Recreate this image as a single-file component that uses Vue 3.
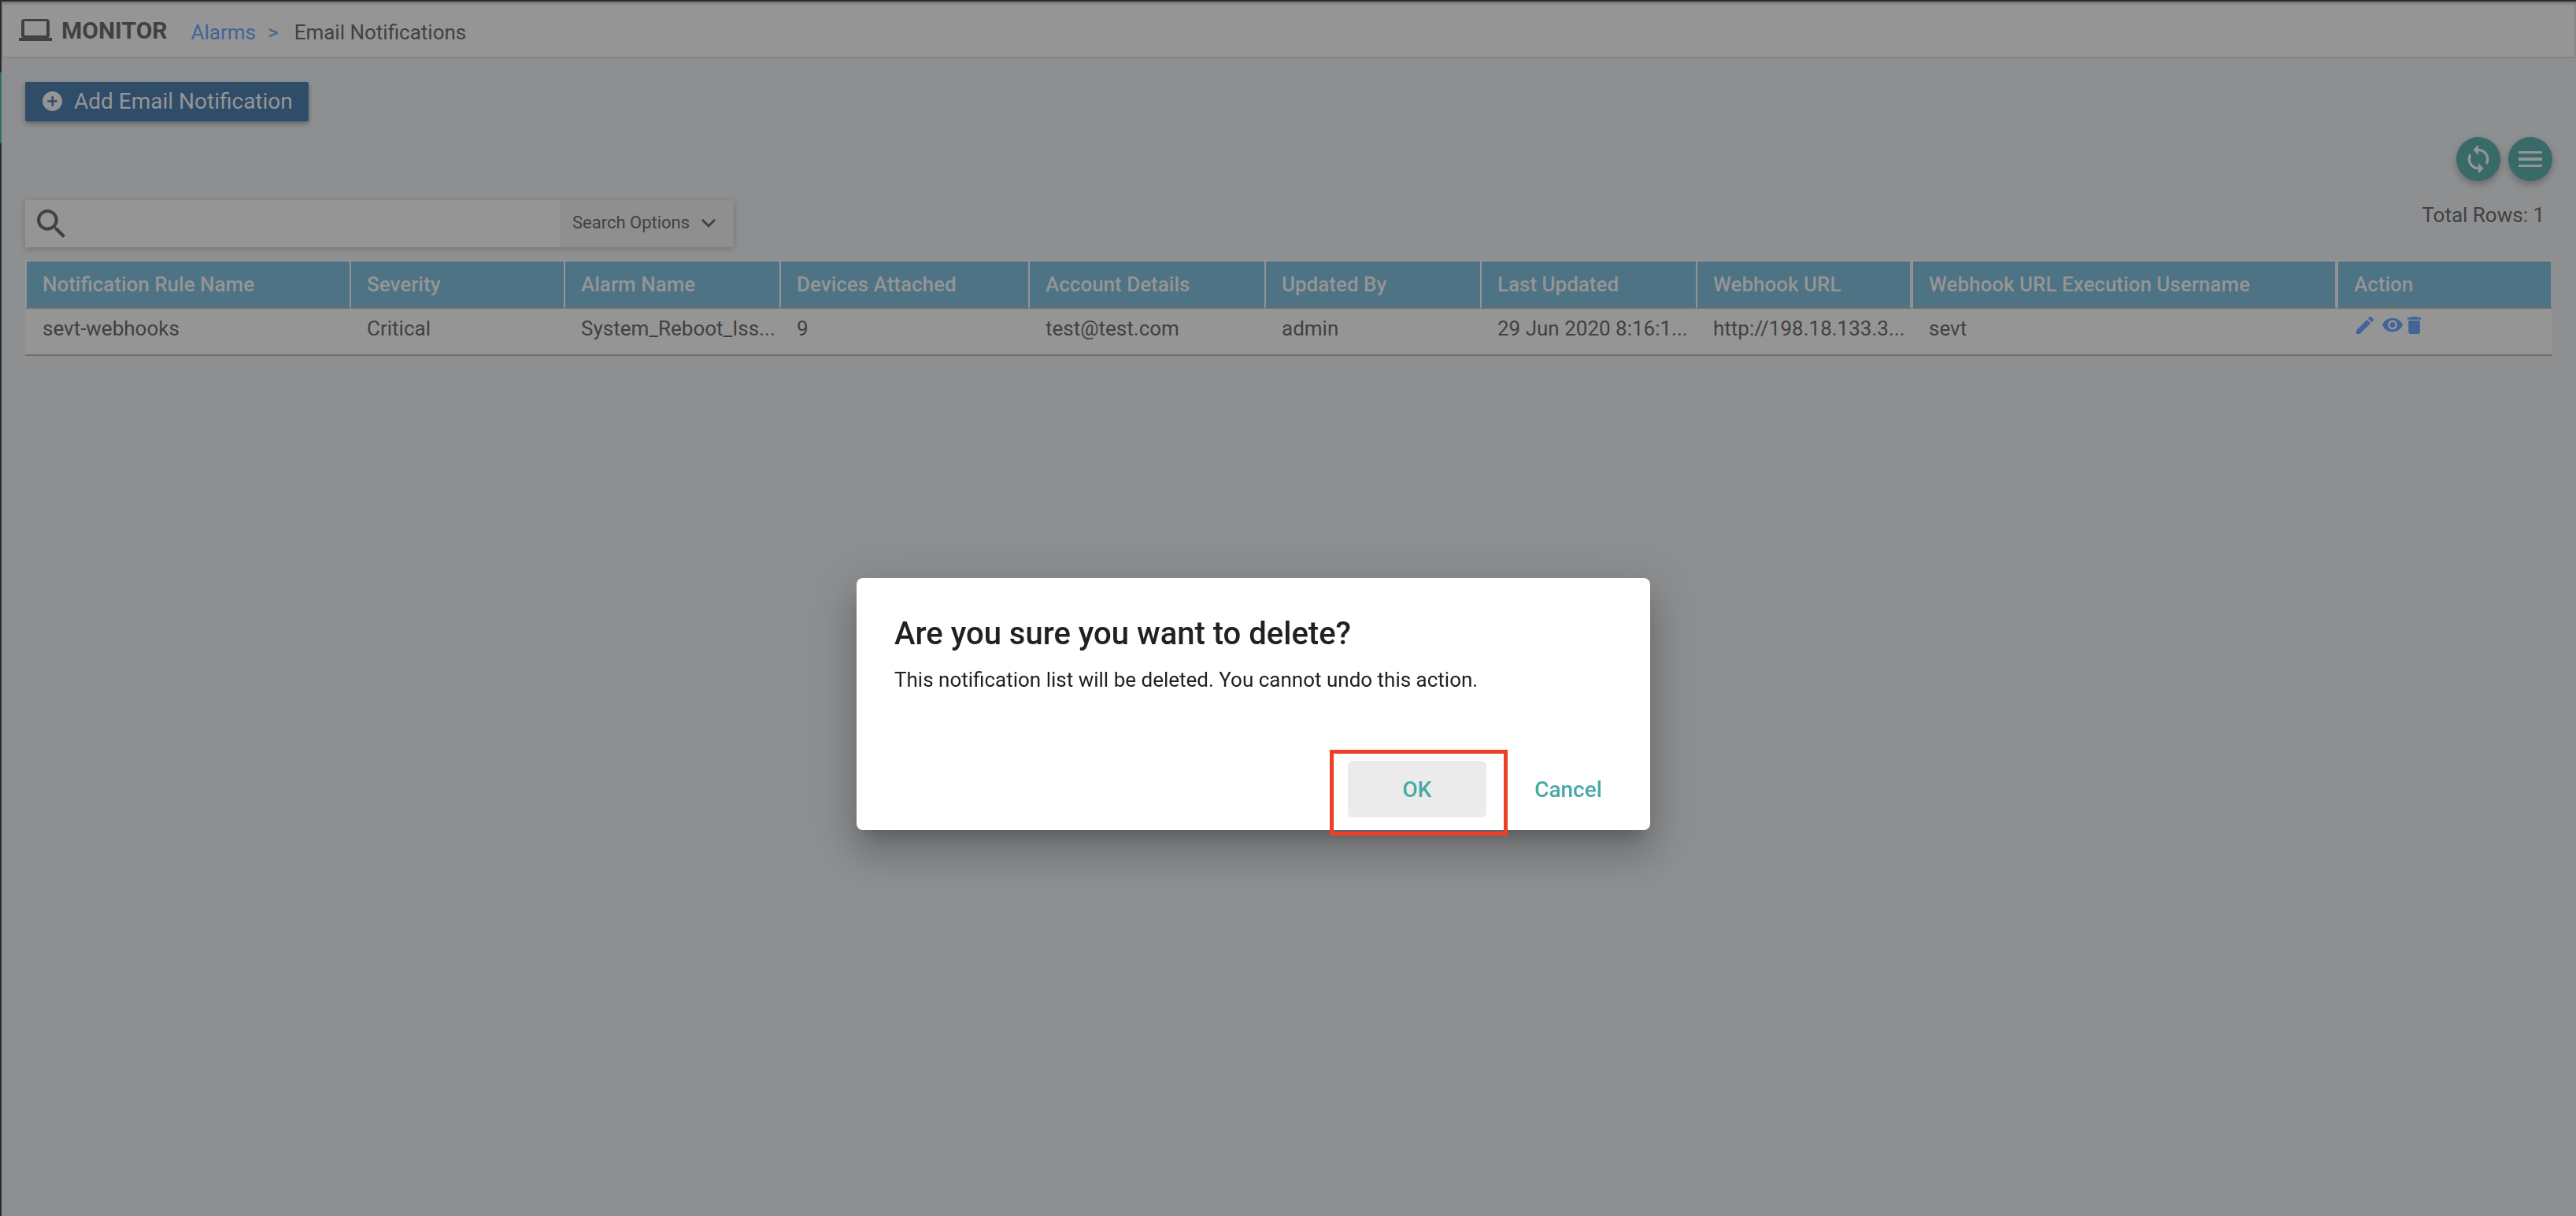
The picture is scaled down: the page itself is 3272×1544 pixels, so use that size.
<script setup>
const columns = [
  { name: 'Notification Rule Name', width: 412 },
  { name: 'Severity', width: 272 },
  { name: 'Alarm Name', width: 274 },
  { name: 'Devices Attached', width: 316 },
  { name: 'Account Details', width: 300 },
  { name: 'Updated By', width: 274 },
  { name: 'Last Updated', width: 274 },
  { name: 'Webhook URL', width: 274, edge: true },
  { name: 'Webhook URL Execution Username', width: 540, edge: true },
  { name: 'Action', width: 274, edge: true },
]
const rows = [
  ['sevt-webhooks', 'Critical', 'System_Reboot_Iss...', '9', 'test@test.com', 'admin', '29 Jun 2020 8:16:1...', 'http://198.18.133.3...', 'sevt'],
]
</script>

<template>
  <div class="app">
    <aside class="rail"><span class="rail-active"></span></aside>
    <div class="page">
      <header class="topbar">
        <svg class="laptop" viewBox="0 0 42 28" aria-hidden="true">
          <path fill-rule="evenodd" d="M7 0h28q4 0 4 4v17q0 3-3 3h6v4H0v-4h6q-3 0-3-3V4q0-4 4-4zm0 3v18h28V3z" />
        </svg>
        <strong class="section">MONITOR</strong>
        <nav class="crumbs">
          <a href="#">Alarms</a>
          <span class="sep">&gt;</span>
          <span>Email Notifications</span>
        </nav>
      </header>

      <main class="content">
        <button type="button" class="add">
          <svg viewBox="0 0 24 24" aria-hidden="true">
            <path fill-rule="evenodd" d="M12 0a12 12 0 1 0 0 24 12 12 0 0 0 0-24zm-1 6h2.400v4.800H18v2.400h-4.600V18H11v-4.800H6v-2.400h5z" />
          </svg>
          Add Email Notification
        </button>

        <div class="round-actions">
          <button type="button" class="round" aria-label="Refresh">
            <svg viewBox="0 0 24 24" width="40" height="40">
              <path d="M12 4V1L8 5l4 4V6c3.310 0 6 2.690 6 6 0 1.010-.25 1.970-.7 2.800l1.460 1.460C19.540 15.030 20 13.570 20 12c0-4.420-3.580-8-8-8zm0 14c-3.310 0-6-2.690-6-6 0-1.010.25-1.970.7-2.800L5.240 7.740C4.460 8.970 4 10.430 4 12c0 4.420 3.580 8 8 8v3l4-4-4-4v3z" />
            </svg>
          </button>
          <button type="button" class="round" aria-label="Menu">
            <svg viewBox="0 0 30 20" width="30" height="20">
              <path d="M0 0h30v3H0zM0 8h30v4H0zM0 17h30v3H0z" />
            </svg>
          </button>
        </div>

        <div class="tools">
          <div class="search">
            <label for="search" aria-label="Search">
              <svg viewBox="3 3 17.500 17.500" width="36" height="36">
                <path d="M15.500 14h-.79l-.28-.27A6.471 6.471 0 0 0 16 9.500 6.500 6.500 0 1 0 9.500 16c1.610 0 3.090-.59 4.230-1.570l.27.28v.79l5 4.990L20.490 19l-4.990-5zm-6 0C7.010 14 5 11.990 5 9.500S7.010 5 9.500 5 14 7.010 14 9.500 11.990 14 9.500 14z" />
              </svg>
            </label>
            <input id="search" type="text" />
            <button type="button" class="options">
              Search Options
              <svg viewBox="0 0 20 13" width="20" height="13" aria-hidden="true">
                <path d="M2 2l8 8 8-8" fill="none" stroke="#414141" stroke-width="3" />
              </svg>
            </button>
          </div>
          <div class="total">Total Rows: 1</div>
        </div>

        <table>
          <colgroup>
            <col v-for="c in columns" :key="c.name" :style="{ width: c.width + 'px' }" />
          </colgroup>
          <thead>
            <tr>
              <th v-for="c in columns" :key="c.name" scope="col" :class="{ edge: c.edge }">{{ c.name }}</th>
            </tr>
          </thead>
          <tbody>
            <tr v-for="row in rows" :key="row[0]">
              <td v-for="(cell, i) in row" :key="i">{{ cell }}</td>
              <td>
                <div class="row-actions">
                  <button type="button" aria-label="Edit">
                    <svg viewBox="3 3 18 18" width="22" height="22">
                      <path d="M3 17.250V21h3.750L17.810 9.940l-3.750-3.750L3 17.250zM20.710 7.040a1 1 0 0 0 0-1.410l-2.340-2.340a1 1 0 0 0-1.410 0l-1.830 1.830 3.750 3.750 1.830-1.830z" />
                    </svg>
                  </button>
                  <button type="button" aria-label="View" class="view">
                    <svg viewBox="1 4 22 16" width="26" height="19">
                      <path d="M12 4.500C7 4.500 2.730 7.610 1 12c1.730 4.390 6 7.500 11 7.500s9.270-3.110 11-7.500c-1.730-4.390-6-7.500-11-7.500zM12 17c-2.760 0-5-2.240-5-5s2.240-5 5-5 5 2.240 5 5-2.240 5-5 5zm0-8c-1.660 0-3 1.340-3 3s1.340 3 3 3 3-1.340 3-3-1.340-3-3-3z" />
                    </svg>
                  </button>
                  <button type="button" aria-label="Delete">
                    <svg viewBox="5 3 14 18" width="17" height="22">
                      <path d="M6 19c0 1.100.9 2 2 2h8c1.100 0 2-.9 2-2V7H6v12zM19 4h-3.500l-1-1h-5l-1 1H5v2h14V4z" />
                    </svg>
                  </button>
                </div>
              </td>
            </tr>
          </tbody>
        </table>
      </main>
    </div>

    <div class="backdrop">
      <section class="dialog" role="dialog" aria-labelledby="dialog-title">
        <h2 id="dialog-title">Are you sure you want to delete?</h2>
        <p>This notification list will be deleted. You cannot undo this action.</p>
        <footer>
          <div class="marked">
            <button type="button" class="ok">OK</button>
            <span class="marker"></span>
          </div>
          <button type="button" class="cancel">Cancel</button>
        </footer>
      </section>
    </div>
  </div>
</template>

<style>
body {
  background: #8d8f91;
}
</style>

<style scoped>
* {
  box-sizing: border-box;
}
.app {
  display: flex;
  min-height: 100vh;
  border-top: 2px solid #2b2c2d;
  background: #8d8f91;
  color: #414141;
  font-family: Roboto, "Liberation Sans", sans-serif;
  font-size: 26px;
  line-height: 30px;
}
button {
  border: 0;
  padding: 0;
  margin: 0;
  background: none;
  color: inherit;
  font: inherit;
}
svg {
  display: block;
  flex: none;
  fill: currentColor;
}
.rail {
  flex: none;
  width: 2px;
  padding-top: 90px;
  background: #2b2c2e;
}
.rail-active {
  display: block;
  height: 90px;
  background: #386b68;
}
.page {
  flex: 1;
  min-width: 0;
  border-top: 2px solid #7b7c7d;
}
.topbar {
  display: flex;
  align-items: center;
  height: 70px;
  padding: 0 20px;
  border: 2px solid #868686;
  background: #959595;
}
.laptop {
  width: 42px;
  height: 28px;
  margin-bottom: 2px;
}
.section {
  margin-left: 12px;
  font-size: 30px;
  font-weight: 700;
}
.crumbs {
  display: flex;
  margin-left: 30px;
  padding-top: 4px;
}
.crumbs a,
.sep {
  color: #426496;
  text-decoration: none;
}
.sep {
  margin: 0 20px 0 15px;
}
.content {
  padding: 30px;
}
.add {
  display: flex;
  align-items: center;
  height: 50px;
  padding: 0 20px 0 22px;
  gap: 15px;
  border-radius: 2px;
  background: #2f4d68;
  box-shadow: 0 3px 6px rgba(0, 0, 0, 0.3);
  color: #959595;
  font-size: 28px;
}
.add svg {
  width: 25px;
  height: 25px;
  margin-bottom: 2px;
}
.round-actions {
  display: flex;
  justify-content: flex-end;
  gap: 10px;
  margin-top: 20px;
}
.round {
  display: flex;
  align-items: center;
  justify-content: center;
  width: 56px;
  height: 56px;
  border-radius: 50%;
  background: #386b68;
  box-shadow: 0 4px 10px rgba(0, 0, 0, 0.26);
  color: #959595;
}
.tools {
  display: flex;
  justify-content: space-between;
  margin: 24px 0 16px;
}
.search {
  display: flex;
  align-items: center;
  width: 900px;
  height: 60px;
  background: #959595;
  box-shadow: 0 2px 8px rgba(0, 0, 0, 0.2);
}
.search label {
  margin: 0 10px 0 15px;
}
.search input {
  flex: 1;
  min-width: 0;
  height: 60px;
  border: 0;
  outline: 0;
  background: none;
  font: inherit;
}
.options {
  display: flex;
  align-items: center;
  gap: 14px;
  width: 220px;
  height: 60px;
  padding: 0 0 2px 15px;
  background: #8f8f8f;
  font-size: 22px;
}
.total {
  padding: 4px 10px 0 0;
}
table {
  width: 100%;
  table-layout: fixed;
  border-collapse: separate;
  border-spacing: 0;
}
th,
td {
  height: 60px;
  padding: 10px 0 0 22px;
  border-bottom: 2px solid #6f6f6f;
  background: #959595;
  text-align: left;
  vertical-align: top;
  white-space: nowrap;
  overflow: hidden;
}
th {
  height: 62px;
  padding: 14px 0 0 20px;
  border-top: 2px solid #959595;
  border-left: 2px solid #959595;
  background: #4d7384;
  color: #959595;
  font-weight: 500;
}
th.edge {
  border-right: 2px solid #8f8f8f;
}
.row-actions {
  display: flex;
  align-items: flex-start;
  padding-left: 3px;
  color: #426496;
}
.row-actions button {
  margin-right: 11px;
}
.row-actions .view {
  margin: 1px 6px 0 0;
}
.backdrop {
  position: fixed;
  inset: 0;
  display: flex;
  align-items: center;
  justify-content: center;
  padding: 244px 88px 0 0;
}
.dialog {
  width: 1008px;
  padding: 48px 48px 16px;
  border-radius: 8px;
  background: #fff;
  box-shadow: 0 16px 20px -10px rgba(0, 0, 0, 0.2), 0 32px 48px 4px rgba(0, 0, 0, 0.14), 0 12px 60px 10px rgba(0, 0, 0, 0.12);
  color: #212121;
}
h2 {
  margin: 0;
  font-size: 40px;
  font-weight: 500;
  line-height: 46px;
}
p {
  margin: 20px 0 88px;
}
footer {
  display: flex;
  justify-content: flex-end;
  gap: 32px;
  color: #48a9a6;
  font-size: 28px;
  font-weight: 500;
}
footer button {
  height: 72px;
  padding-top: 2px;
  border-radius: 6px;
}
.marked {
  position: relative;
}
.ok {
  width: 176px;
  background: #ebebeb;
}
.marker {
  position: absolute;
  inset: -14px -27px -23px -23px;
  border: 5px solid #ec4026;
}
.cancel {
  width: 144px;
  margin-right: -16px;
}
</style>
